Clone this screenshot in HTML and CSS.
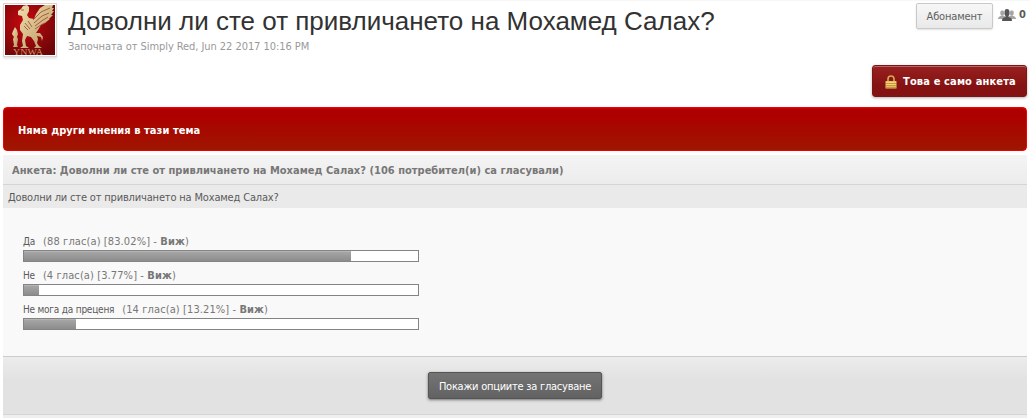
FILE: index.html
```html
<!DOCTYPE html>
<html lang="bg">
<head>
    <meta charset="UTF-8">
    <title>Доволни ли сте от привличането на Мохамед Салах?</title>
    <link rel="stylesheet" href="styles.css">
</head>
<body>
    <div class="topic-header">
        <div class="avatar">
            <svg viewBox="0 0 50 50" width="50" height="50">
                <defs>
                    <radialGradient id="red" cx="40%" cy="35%" r="75%">
                        <stop offset="0" stop-color="#c8090f"/>
                        <stop offset="1" stop-color="#6c0608"/>
                    </radialGradient>
                    <linearGradient id="gold" x1="0" y1="0" x2="1" y2="1">
                        <stop offset="0" stop-color="#f0dfae"/>
                        <stop offset="1" stop-color="#ba9561"/>
                    </linearGradient>
                </defs>
                <rect width="50" height="50" fill="url(#red)"/>
                <g fill="url(#gold)">
                    <path d="M13 6l3-2 2-3 4-1 2 2 0 4-2 4 2 3 5 1 2-5 4-6 5-3h8l-1 3h2l-2 3h2l-3 4h2l-4 4h1l-5 4-4 2-3 5-2 3 4 0 3 4-1 4-1-4-4-1 1 3-1 4 2 3 3 2h-8l2-2-2-5-3-4-4-1-2 4 1 6 3 2h-9l3-2-1-5 1-7-3-4 0-5 3-5-1-4-4-1z"/>
                    <path d="M10 22l2 3 1 4-1 3 1 2-1 6 1 2H8l1-2-1-6 1-2-2-3 1-3z"/>
                </g>
                <path d="M28 15l8-8 9-4M29 18l8-7 7-3M30 21l8-6 5-3M30 24l6-4 4-2M23 16l4 6M20 18l5 6M19 21l4 4M16 5h3" stroke="#97462c" stroke-width=".8" fill="none"/>
                <text class="crest" x="8" y="49.5" textLength="30" lengthAdjust="spacingAndGlyphs">YNWA</text>
            </svg>
        </div>
        <div class="heading">
            <h1>Доволни ли сте от привличането на Мохамед Салах?</h1>
            <p class="started">Започната от Simply Red, Jun 22 2017 10:16 PM</p>
        </div>
        <div class="follow">
            <a class="follow-btn">Абонамент</a>
            <svg class="people" viewBox="0 0 18 13" width="18" height="13">
                <g fill="#a5a5a5">
                    <ellipse cx="4.2" cy="4" rx="2" ry="2.7"/>
                    <ellipse cx="13.8" cy="4" rx="2" ry="2.7"/>
                    <path d="M0 10q0-2 1.5-2.5L3.4 6.500h2L8 8v2zM18 10q0-2-1.500-2.500L14.600 6.500h-2L10 8v2z"/>
                </g>
                <path d="M6.500 3q0-3 2.500-3t2.500 3v2q0 1-1 2v1l2.500 1q1 .5 1 3H4q0-2.500 1-3L7.500 8V7q-1-1-1-2z" fill="#555"/>
            </svg>
            <span class="count">0</span>
        </div>
    </div>

    <div class="topic-controls">
        <a class="locked-btn">
            <svg viewBox="0 0 12 14" width="12" height="14">
                <path d="M3 7V4q0-3 3-3t3 3v3" fill="none" stroke="#d5aa50" stroke-width="1.6"/>
                <rect x="0.500" y="6" width="11" height="7.500" rx=".5" fill="#e9bd5d"/>
                <path d="M1 8.5h10M1 10.5h10M1 12.5h10" stroke="#b98632" stroke-width=".7"/>
                <path d="M1 7.5h10M1 9.5h10" stroke="#f9dc8e" stroke-width=".7"/>
            </svg>
            <span>Това е само анкета</span>
        </a>
    </div>

    <div class="maintitle"><span>Няма други мнения в тази тема</span></div>

    <div class="poll">
        <div class="poll-title"><span>Анкета: Доволни ли сте от привличането на Мохамед Салах? (106 потребител(и) са гласували)</span></div>
        <div class="poll-question"><span>Доволни ли сте от привличането на Мохамед Салах?</span></div>
        <div class="poll-body">
            <div class="choice">
                <div class="label"><span class="answer">Да</span><span class="votes">(88 глас(а) [83.02%] - <b>Виж</b>)</span></div>
                <div class="bar"><div class="fill" style="width: 83.02%"></div></div>
            </div>
            <div class="choice">
                <div class="label"><span class="answer">Не</span><span class="votes">(4 глас(а) [3.77%] - <b>Виж</b>)</span></div>
                <div class="bar"><div class="fill" style="width: 3.77%"></div></div>
            </div>
            <div class="choice">
                <div class="label"><span class="answer">Не мога да преценя</span><span class="votes">(14 глас(а) [13.21%] - <b>Виж</b>)</span></div>
                <div class="bar"><div class="fill" style="width: 13.21%"></div></div>
            </div>
        </div>
        <div class="poll-footer">
            <button class="show-btn"><span>Покажи опциите за гласуване</span></button>
        </div>
    </div>
</body>
</html>
```

FILE: styles.css
```css
* {
    box-sizing: border-box;
}
body {
    margin: 0;
    padding: 0 3px;
    height: 418px;
    overflow: hidden;
    background: #fff;
    border-top: 1px solid #f7f7f7;
    font: 11px/14px Tahoma, "DejaVu Sans Condensed", "DejaVu Sans", sans-serif;
    font-stretch: condensed;
    color: #5a5a5a;
    white-space: nowrap;
}
.topic-header {
    display: flex;
    height: 64px;
    padding-top: 2px;
}
.avatar {
    width: 54px;
    height: 54px;
    padding: 1px;
    border: 1px solid #d5d5d5;
    background: #fff;
    box-shadow: 0 2px 2px rgba(0, 0, 0, 0.1);
}
.avatar svg {
    display: block;
}
.crest {
    font: 8px/8px "Liberation Serif", serif;
    fill: #c29a63;
}
.heading {
    flex: 1;
    padding-left: 11px;
}
h1 {
    margin: 2px 0 0;
    font: 26px/32px Arial, "Liberation Sans", sans-serif;
    color: #323232;
}
.started {
    margin: 3px 0 0;
    letter-spacing: -0.06px;
    color: #999;
}
.follow {
    display: flex;
    align-items: flex-start;
}
.follow-btn {
    width: 77px;
    height: 26px;
    line-height: 25px;
    text-align: center;
    letter-spacing: -0.15px;
    color: #616161;
    border: 1px solid #c9c9c9;
    border-radius: 2px;
    background: linear-gradient(#f7f7f7, #e9e9e9);
    box-shadow: 0 1px 2px rgba(0, 0, 0, 0.12);
}
.people {
    margin: 6px 3px 0 5px;
}
.count {
    width: 8px;
    margin-top: 5px;
    font-weight: bold;
}
.topic-controls {
    display: flex;
    justify-content: flex-end;
    height: 42px;
}
.locked-btn {
    display: flex;
    align-items: center;
    gap: 6px;
    width: 155px;
    height: 32px;
    padding: 2px 0 0 12px;
    letter-spacing: 0.14px;
    color: #fff;
    font-weight: bold;
    border: 1px solid #7b1616;
    border-radius: 3px;
    background: linear-gradient(#982020, #851212 65%);
    box-shadow: inset 0 1px 0 #b96666, 0 1px 3px rgba(0, 0, 0, 0.3);
}
.maintitle {
    height: 44px;
    padding-left: 14px;
    line-height: 45px;
    font-weight: bold;
    letter-spacing: 0.06px;
    color: #fff;
    border: 1px solid #f00000;
    border-radius: 4px;
    background: linear-gradient(#ad0000 20%, #9e1600);
    box-shadow: inset 0 1px 0 #cb0000;
}
.poll {
    margin-top: 4px;
}
.poll-title {
    height: 30px;
    padding-left: 9px;
    line-height: 31px;
    font-weight: bold;
    letter-spacing: 0.01px;
    color: #777;
    border-bottom: 1px solid #d5d5d5;
    background: linear-gradient(#f4f4f4, #ececec);
}
.poll-question {
    height: 23px;
    padding-left: 5px;
    line-height: 25px;
    letter-spacing: -0.17px;
    background: #eaeaea;
}
.poll-body {
    display: flex;
    flex-direction: column;
    gap: 8px;
    height: 148px;
    padding: 28px 20px 0;
    background: #f9f9f9;
}
.choice {
    height: 26px;
}
.label {
    display: flex;
    align-items: baseline;
    gap: 8px;
    height: 14px;
    line-height: 12px;
    color: #777;
}
.answer {
    font-size: 10px;
    letter-spacing: -0.22px;
    color: #5a5a5a;
}
.votes {
    letter-spacing: 0.1px;
}
.bar {
    width: 396px;
    height: 12px;
    border: 1px solid #848484;
    background: #fff;
}
.fill {
    height: 10px;
    background: linear-gradient(#a8a8a8, #8c8c8c);
    box-shadow: inset 0 1px 0 #b5b5b5;
}
.poll-footer {
    height: 59px;
    padding-top: 15px;
    text-align: center;
    border-top: 1px solid #cbcdcb;
    border-bottom: 1px solid #d5d5d5;
    background: linear-gradient(#ececec, #e2e2e2 40%);
    box-shadow: 0 4px 0 #efefef;
}
.show-btn {
    width: 174px;
    height: 27px;
    padding: 2px 0 0;
    font: inherit;
    letter-spacing: -0.25px;
    color: #fff;
    border: 1px solid #555;
    border-radius: 2px;
    background: linear-gradient(#747474, #626262);
    box-shadow: 0 1px 3px rgba(0, 0, 0, 0.5);
}
```
